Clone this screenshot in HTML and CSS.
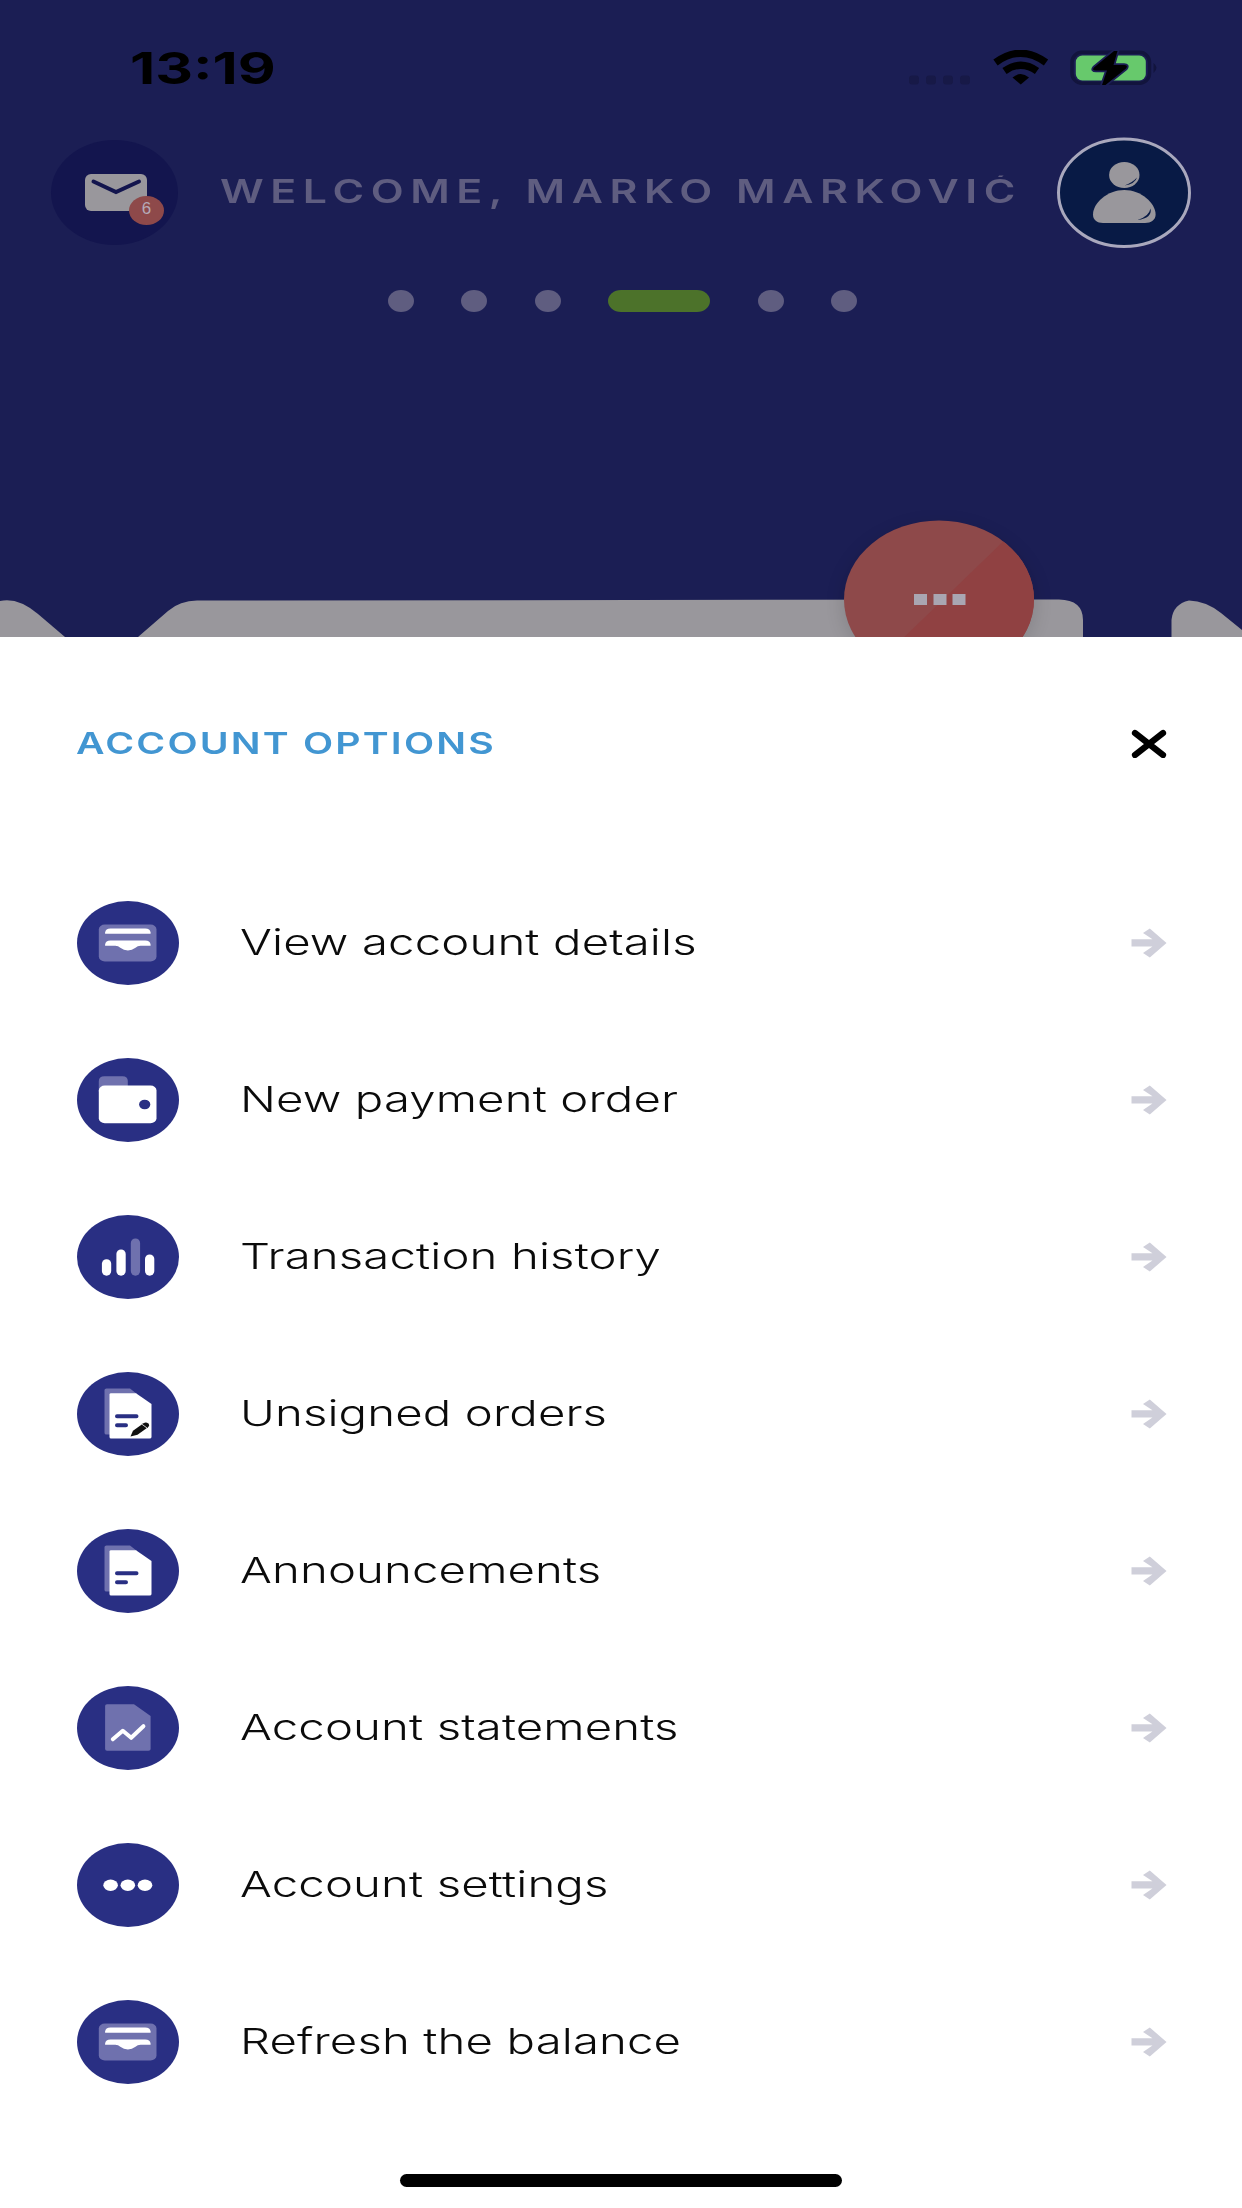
FILE: index.html
```html
<!DOCTYPE html>
<html lang="en">
<head>
<meta charset="utf-8">
<title>Account options</title>
<link rel="stylesheet" href="styles.css">
</head>
<body>
<svg class="defs" width="0" height="0" aria-hidden="true">
  <symbol id="arrow" viewBox="0 0 36 30">
    <path fill="#cfcfda" d="M0.500 11.200H21.500L12 5L18.800 0.500L35.500 15L18.800 29.500L12 25L21.500 18.500H0.500Z"/>
  </symbol>
  <symbol id="card" viewBox="0 0 102 84">
    <rect x="21.800" y="23.500" width="57.700" height="37" rx="6" ry="5" fill="#6f71ae"/>
    <path fill="#fff" d="M28.100 32.800V31.500Q28.600 27.500 33.500 27.500H68.200Q73.100 27.500 73.600 31.500V32.800Z"/>
    <path fill="#fff" d="M28.100 44.800V43.500Q28.600 39.500 33.500 39.500H68.200Q73.100 39.500 73.600 43.500V44.800H63.500Q60.500 44.800 58.500 46.800Q55 49.400 50.900 49.400Q46.800 49.400 43.300 46.800Q41.300 44.800 38.300 44.800Z"/>
  </symbol>
  <symbol id="doc" viewBox="0 0 102 84">
    <path fill="#6f71ae" d="M29.500 16.500H53L60 22H34V62.500H29.500Q27.500 62.500 27.500 61V18Q27.500 16.500 29.500 16.500Z"/>
    <path fill="#fff" d="M34 21.200H59L74.500 32V65Q74.500 66.500 72.500 66.500H34Q32.500 66.500 32.500 65V22.500Q32.500 21.200 34 21.200Z"/>
    <path stroke="#292f83" stroke-width="4" stroke-linecap="round" d="M40 44.200H59.500M40 53.200H49"/>
  </symbol>
</svg>
<main class="screen">
  <section class="home">
    <div class="status">
      <span class="time">13:19</span>
      <svg class="status-icons" width="250" height="36" viewBox="0 0 250 36">
        <g fill="#171947"><rect x="1" y="25.500" width="10" height="9" rx="3"/><rect x="18" y="25.500" width="10" height="9" rx="3"/><rect x="35" y="25.500" width="10" height="9" rx="3"/><rect x="52" y="25.500" width="10" height="9" rx="3"/></g>
        <g fill="none" stroke="#000" stroke-width="7.200"><path d="M87.500 12.500Q112.700-6 138 12.500"/><path d="M96.500 21Q112.700 9.500 129 21"/></g>
        <path d="M104.500 27.500Q112.700 20.500 121 27.500L112.700 34.500Z"/>
        <rect x="164" y="2.300" width="77.500" height="31" rx="10" fill="none" stroke="#12143d" stroke-width="3.500"/>
        <path fill="#12143d" d="M245.500 13Q251.500 17.500 245.500 23Z"/>
        <rect x="167.800" y="5.500" width="70" height="25" rx="6.500" fill="#67c96c"/>
        <path d="M206 1L186 17.500Q183.500 20.500 188 20.500H199L194 35H197.500L218 18.500Q220.500 15 216 15H205.500L209.500 1Z" fill="#000" stroke="#1b1e54" stroke-width="3.500" paint-order="stroke"/>
      </svg>
    </div>
    <header class="welcome-bar">
      <div class="mail">
        <svg width="62" height="37" viewBox="0 0 62 37"><rect width="62" height="37" rx="6" fill="#99979c"/><path d="M8.500 7.500L31 18L54 7.500" fill="none" stroke="#13154e" stroke-width="4" stroke-linecap="round"/></svg>
        <span class="badge">6</span>
      </div>
      <h1 class="welcome"><span>WELCOME, MARKO MARKOVIĆ</span></h1>
      <svg class="avatar" width="134" height="111" viewBox="0 0 134 111">
        <ellipse cx="67" cy="55.800" rx="65.500" ry="53.700" fill="#081a45" stroke="#a9a8bd" stroke-width="3"/>
        <ellipse cx="67.300" cy="38" rx="15.200" ry="13" fill="#99979c"/>
        <path fill="#99979c" d="M67.300 53C84 53 98.600 66 98.600 77.500C98.600 83 94 86 88 86H46C40 86 36 83 36 77.500C36 66 50.500 53 67.300 53Z"/>
        <path fill="#081a45" d="M80 40.500Q78 47 67.500 48.500Q75 46 80 40.500ZM93.500 71.500Q95.500 81 80.500 83Q92 79.500 93.500 71.500Z"/>
      </svg>
    </header>
    <nav class="pages"><i></i><i></i><i></i><i class="on"></i><i></i><i></i></nav>
    <svg class="cards" width="1242" height="127" viewBox="0 0 1242 127">
      <defs>
        <clipPath id="fab"><ellipse cx="939" cy="89.500" rx="95" ry="79"/></clipPath>
        <filter id="soft" x="-20%" y="-20%" width="140%" height="140%"><feGaussianBlur stdDeviation="9"/></filter>
      </defs>
      <g fill="#99979c">
        <path d="M0 91Q18 87 38 104L65 127H0Z"/>
        <path d="M138 127L168 101Q180 90.500 197 90.500L1059 89.500Q1083 90 1083 110V127Z"/>
        <path d="M1171.500 127V110Q1173 94 1189 90.500Q1206 91 1221 103L1242 120V127Z"/>
      </g>
      <ellipse cx="939" cy="93" rx="97" ry="78" opacity=".12" filter="url(#soft)"/>
      <g clip-path="url(#fab)"><rect x="840" width="200" height="127" fill="#8e494a"/><path fill="#904142" d="M1013 22L894 137H1040V22Z"/></g>
      <path fill="#a9a6b2" d="M914 84h13v11h-13zM933.500 84h13v11h-13zM952.500 84h13v11h-13z"/>
    </svg>
  </section>
  <section class="sheet">
    <header class="sheet-head">
      <h2>ACCOUNT OPTIONS</h2>
      <svg width="36" height="29" viewBox="0 0 36 29"><path d="M4 4L32 26M32 4L4 26" stroke="#000" stroke-width="6.200" stroke-linecap="round"/></svg>
    </header>
    <ul class="options">
      <li><svg class="icon" viewBox="0 0 102 84"><use href="#card"/></svg><span>View account details</span><svg class="arrow"><use href="#arrow"/></svg></li>
      <li><svg class="icon" viewBox="0 0 102 84"><path fill="#6f71ae" d="M21.800 34V23Q21.800 18.200 27.500 18.200H45.500Q50.800 18.200 50.800 23V34Z"/><rect x="21.800" y="27.500" width="57.700" height="37.700" rx="6" ry="5" fill="#fff"/><ellipse cx="67.700" cy="46.500" rx="5.600" ry="4.800" fill="#292f83"/></svg><span>New payment order</span><svg class="arrow"><use href="#arrow"/></svg></li>
      <li><svg class="icon" viewBox="0 0 102 84"><g fill="#fff"><rect x="24.900" y="44.200" width="9.300" height="16.500" rx="4.600"/><rect x="39.400" y="34.500" width="9.300" height="26.200" rx="4.600"/><rect x="53.800" y="23.500" width="9.300" height="37.200" rx="4.600" fill="#6f71ae"/><rect x="68" y="39.500" width="9.300" height="21.200" rx="4.600"/></g></svg><span>Transaction history</span><svg class="arrow"><use href="#arrow"/></svg></li>
      <li><svg class="icon" viewBox="0 0 102 84"><use href="#doc"/><path fill="#111" d="M53.500 64.500L56 58.700L66.500 51.200Q69 49.600 71.300 51.400Q73.200 53.300 71 55.200L60.500 62.700Z"/><path stroke="#fff" stroke-width=".8" d="M65 52.300L70 56"/></svg><span>Unsigned orders</span><svg class="arrow"><use href="#arrow"/></svg></li>
      <li><svg class="icon" viewBox="0 0 102 84"><use href="#doc"/></svg><span>Announcements</span><svg class="arrow"><use href="#arrow"/></svg></li>
      <li><svg class="icon" viewBox="0 0 102 84"><path fill="#6f71ae" d="M30 18.200H57L73.600 30V63Q73.600 64.800 71.500 64.800H30Q28.100 64.800 28.100 63V20Q28.100 18.200 30 18.200Z"/><path d="M35.800 53.300L45.800 44.800L54.200 51.800L66.400 40.200" fill="none" stroke="#fff" stroke-width="4" stroke-linecap="round" stroke-linejoin="round"/></svg><span>Account statements</span><svg class="arrow"><use href="#arrow"/></svg></li>
      <li><svg class="icon" viewBox="0 0 102 84"><g fill="#fff"><ellipse cx="33.600" cy="42.200" rx="7.300" ry="5.700"/><ellipse cx="50.800" cy="42.200" rx="7.300" ry="5.700"/><ellipse cx="68" cy="42.200" rx="7.300" ry="5.700"/></g></svg><span>Account settings</span><svg class="arrow"><use href="#arrow"/></svg></li>
      <li><svg class="icon" viewBox="0 0 102 84"><use href="#card"/></svg><span>Refresh the balance</span><svg class="arrow"><use href="#arrow"/></svg></li>
    </ul>
    <div class="home-indicator"></div>
  </section>
</main>
</body>
</html>
```
FILE: styles.css
```css
* { box-sizing: border-box; margin: 0; padding: 0; }
body { font-family: Inter, "Liberation Sans", sans-serif; background: #fff; }
svg { display: block; flex: none; }
.defs { position: absolute; }
.screen { width: 1242px; height: 2208px; overflow: hidden; display: flex; flex-direction: column; }

/* Dimmed home screen behind the sheet */
.home { height: 637px; background: #1b1e54; display: flex; flex-direction: column; overflow: hidden; }
.status { height: 135px; padding: 0 84px 0 130px; display: flex; align-items: center; justify-content: space-between; }
.time { font-size: 44px; font-weight: 700; line-height: 50px; transform: scaleX(1.33); transform-origin: 0 50%; }
.welcome-bar { height: 115px; padding: 0 51px; display: flex; align-items: center; }
.mail { position: relative; width: 127px; height: 105px; border-radius: 50%; background: #13154e; display: flex; align-items: center; justify-content: center; padding-left: 3px; }
.badge { position: absolute; left: 78px; top: 56px; width: 35px; height: 29px; border-radius: 50%; background: #8e494a; color: #b5aab8; font: 17px/25px "Liberation Sans", sans-serif; text-align: center; }
.welcome { flex: 1; margin-left: 42px; padding-bottom: 4px; color: #5f5d80; font-size: 33px; font-weight: 600; line-height: 40px; letter-spacing: 5.05px; white-space: nowrap; }
.welcome span { display: inline-block; transform: scaleX(1.3); transform-origin: 0 50%; clip-path: inset(5px 0 0 0); }
.pages { height: 102px; display: flex; align-items: center; justify-content: center; gap: 47.500px; padding-left: 3px; }
.pages i { width: 26px; height: 22px; border-radius: 50%; background: #5f5d80; }
.pages .on { width: 102px; border-radius: 13px / 11px; background: #4c722a; }
.cards { margin-top: auto; }

/* Options sheet */
.sheet { height: 1571px; background: #fff; display: flex; flex-direction: column; }
.sheet-head { height: 213px; margin-bottom: 14.500px; padding: 0 75px 0 76px; display: flex; align-items: center; justify-content: space-between; }
.sheet-head h2 { color: #4296d2; font-size: 30.200px; font-weight: 600; line-height: 40px; padding-bottom: 1px; letter-spacing: 1.680px; transform: scaleX(1.3); transform-origin: 0 50%; }
.options { list-style: none; }
.options li { height: 157px; padding: 0 75px 0 76.500px; display: flex; align-items: center; }
.options span { flex: 1; margin: 0 200px 0 61px; padding-bottom: 1px; color: #0b0b0b; font-size: 35.300px; font-weight: 300; line-height: 44px; letter-spacing: .1px; white-space: nowrap; transform: scaleX(1.34); transform-origin: 0 50%; }
.icon { width: 102px; height: 84px; border-radius: 50%; background: #292f83; }
.arrow { width: 36px; height: 30px; }
.home-indicator { width: 442px; height: 13px; margin: 53px auto 0; border-radius: 7px; background: #000; }
```
